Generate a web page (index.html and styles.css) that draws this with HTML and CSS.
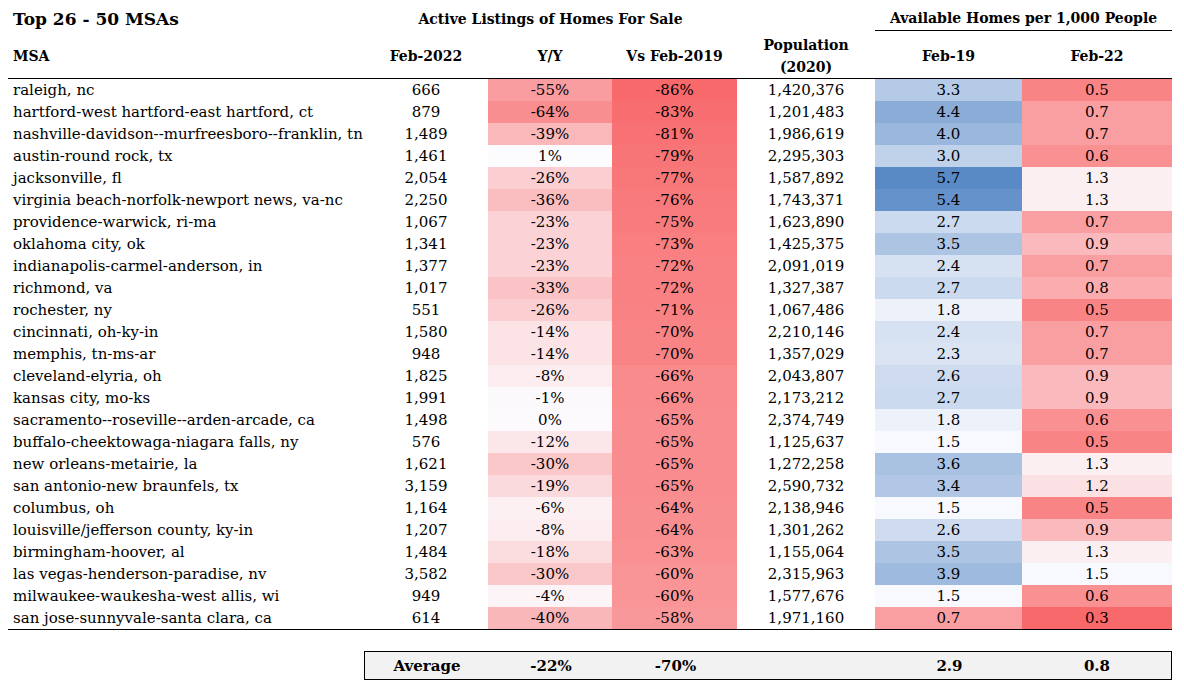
FILE: index.html
```html
<!DOCTYPE html>
<html lang="en">
<head>
<meta charset="utf-8">
<title>Top 26 - 50 MSAs</title>
<link rel="stylesheet" href="styles.css">
</head>
<body>
<table class="grid">
  <colgroup>
    <col class="c-msa"><col class="c-num"><col class="c-yy"><col class="c-vs"><col class="c-pop"><col class="c-f19"><col class="c-f22">
  </colgroup>
  <thead>
    <tr class="top">
      <th class="title">Top 26 - 50 MSAs</th>
      <th class="group" colspan="3">Active Listings of Homes For Sale</th>
      <th></th>
      <th class="group line" colspan="2">Available Homes per 1,000 People</th>
    </tr>
    <tr class="head">
      <th class="msa">MSA</th>
      <th>Feb-2022</th>
      <th>Y/Y</th>
      <th>Vs Feb-2019</th>
      <th class="pop">Population<br>(2020)</th>
      <th>Feb-19</th>
      <th>Feb-22</th>
    </tr>
  </thead>
  <tbody>
    <tr><td class="msa">raleigh, nc</td><td>666</td><td style="background:#F99DA0">-55%</td><td style="background:#F8696B">-86%</td><td>1,420,376</td><td style="background:#B4CAE6">3.3</td><td style="background:#F98486">0.5</td></tr>
    <tr><td class="msa">hartford-west hartford-east hartford, ct</td><td>879</td><td style="background:#F98E90">-64%</td><td style="background:#F86E70">-83%</td><td>1,201,483</td><td style="background:#8BACD7">4.4</td><td style="background:#F99EA1">0.7</td></tr>
    <tr><td class="msa">nashville-davidson--murfreesboro--franklin, tn</td><td>1,489</td><td style="background:#FAB8BB">-39%</td><td style="background:#F87174">-81%</td><td>1,986,619</td><td style="background:#9AB7DD">4.0</td><td style="background:#F99EA1">0.7</td></tr>
    <tr><td class="msa">austin-round rock, tx</td><td>1,461</td><td style="background:#FCFCFF">1%</td><td style="background:#F87577">-79%</td><td>2,295,303</td><td style="background:#C0D2EA">3.0</td><td style="background:#F99193">0.6</td></tr>
    <tr><td class="msa">jacksonville, fl</td><td>2,054</td><td style="background:#FBCED1">-26%</td><td style="background:#F8787A">-77%</td><td>1,587,892</td><td style="background:#5A8AC6">5.7</td><td style="background:#FCEFF1">1.3</td></tr>
    <tr><td class="msa">virginia beach-norfolk-newport news, va-nc</td><td>2,250</td><td style="background:#FABEC0">-36%</td><td style="background:#F87A7C">-76%</td><td>1,743,371</td><td style="background:#6592CA">5.4</td><td style="background:#FCEFF1">1.3</td></tr>
    <tr><td class="msa">providence-warwick, ri-ma</td><td>1,067</td><td style="background:#FBD3D6">-23%</td><td style="background:#F87C7E">-75%</td><td>1,623,890</td><td style="background:#CBDAEE">2.7</td><td style="background:#F99EA1">0.7</td></tr>
    <tr><td class="msa">oklahoma city, ok</td><td>1,341</td><td style="background:#FBD3D6">-23%</td><td style="background:#F97F81">-73%</td><td>1,425,375</td><td style="background:#ADC4E3">3.5</td><td style="background:#FAB9BC">0.9</td></tr>
    <tr><td class="msa">indianapolis-carmel-anderson, in</td><td>1,377</td><td style="background:#FBD3D6">-23%</td><td style="background:#F98183">-72%</td><td>2,091,019</td><td style="background:#D6E1F2">2.4</td><td style="background:#F99EA1">0.7</td></tr>
    <tr><td class="msa">richmond, va</td><td>1,017</td><td style="background:#FAC3C5">-33%</td><td style="background:#F98183">-72%</td><td>1,327,387</td><td style="background:#CBDAEE">2.7</td><td style="background:#FAACAE">0.8</td></tr>
    <tr><td class="msa">rochester, ny</td><td>551</td><td style="background:#FBCED1">-26%</td><td style="background:#F98284">-71%</td><td>1,067,486</td><td style="background:#EDF1FA">1.8</td><td style="background:#F98486">0.5</td></tr>
    <tr><td class="msa">cincinnati, oh-ky-in</td><td>1,580</td><td style="background:#FBE3E6">-14%</td><td style="background:#F98486">-70%</td><td>2,210,146</td><td style="background:#D6E1F2">2.4</td><td style="background:#F99EA1">0.7</td></tr>
    <tr><td class="msa">memphis, tn-ms-ar</td><td>948</td><td style="background:#FBE3E6">-14%</td><td style="background:#F98486">-70%</td><td>1,357,029</td><td style="background:#DAE4F3">2.3</td><td style="background:#F99EA1">0.7</td></tr>
    <tr><td class="msa">cleveland-elyria, oh</td><td>1,825</td><td style="background:#FCEDF0">-8%</td><td style="background:#F98B8D">-66%</td><td>2,043,807</td><td style="background:#CFDCEF">2.6</td><td style="background:#FAB9BC">0.9</td></tr>
    <tr><td class="msa">kansas city, mo-ks</td><td>1,991</td><td style="background:#FCF9FC">-1%</td><td style="background:#F98B8D">-66%</td><td>2,173,212</td><td style="background:#CBDAEE">2.7</td><td style="background:#FAB9BC">0.9</td></tr>
    <tr><td class="msa">sacramento--roseville--arden-arcade, ca</td><td>1,498</td><td style="background:#FCFAFD">0%</td><td style="background:#F98C8F">-65%</td><td>2,374,749</td><td style="background:#EDF1FA">1.8</td><td style="background:#F99193">0.6</td></tr>
    <tr><td class="msa">buffalo-cheektowaga-niagara falls, ny</td><td>576</td><td style="background:#FBE6E9">-12%</td><td style="background:#F98C8F">-65%</td><td>1,125,637</td><td style="background:#F8F9FE">1.5</td><td style="background:#F98486">0.5</td></tr>
    <tr><td class="msa">new orleans-metairie, la</td><td>1,621</td><td style="background:#FBC8CA">-30%</td><td style="background:#F98C8F">-65%</td><td>1,272,258</td><td style="background:#A9C2E2">3.6</td><td style="background:#FCEFF1">1.3</td></tr>
    <tr><td class="msa">san antonio-new braunfels, tx</td><td>3,159</td><td style="background:#FBDADD">-19%</td><td style="background:#F98C8F">-65%</td><td>2,590,732</td><td style="background:#B1C7E5">3.4</td><td style="background:#FBE1E4">1.2</td></tr>
    <tr><td class="msa">columbus, oh</td><td>1,164</td><td style="background:#FCF0F3">-6%</td><td style="background:#F98E90">-64%</td><td>2,138,946</td><td style="background:#F8F9FE">1.5</td><td style="background:#F98486">0.5</td></tr>
    <tr><td class="msa">louisville/jefferson county, ky-in</td><td>1,207</td><td style="background:#FCEDF0">-8%</td><td style="background:#F98E90">-64%</td><td>1,301,262</td><td style="background:#CFDCEF">2.6</td><td style="background:#FAB9BC">0.9</td></tr>
    <tr><td class="msa">birmingham-hoover, al</td><td>1,484</td><td style="background:#FBDCDF">-18%</td><td style="background:#F99092">-63%</td><td>1,155,064</td><td style="background:#ADC4E3">3.5</td><td style="background:#FCEFF1">1.3</td></tr>
    <tr><td class="msa">las vegas-henderson-paradise, nv</td><td>3,582</td><td style="background:#FBC8CA">-30%</td><td style="background:#F99597">-60%</td><td>2,315,963</td><td style="background:#9EBADE">3.9</td><td style="background:#F8F9FE">1.5</td></tr>
    <tr><td class="msa">milwaukee-waukesha-west allis, wi</td><td>949</td><td style="background:#FCF4F7">-4%</td><td style="background:#F99597">-60%</td><td>1,577,676</td><td style="background:#F8F9FE">1.5</td><td style="background:#F99193">0.6</td></tr>
    <tr class="last"><td class="msa">san jose-sunnyvale-santa clara, ca</td><td>614</td><td style="background:#FAB7B9">-40%</td><td style="background:#F9989B">-58%</td><td>1,971,160</td><td style="background:#F99EA1">0.7</td><td style="background:#F8696B">0.3</td></tr>
  </tbody>
</table>

<div class="avg">
  <span class="avg-cell c1">Average</span>
  <span class="avg-cell c2">-22%</span>
  <span class="avg-cell c3">-70%</span>
  <span class="avg-cell c4"></span>
  <span class="avg-cell c5">2.9</span>
  <span class="avg-cell c6">0.8</span>
</div>
</body>
</html>
```

FILE: styles.css
```css
html, body {
  margin: 0;
  padding: 0;
  background: #ffffff;
}

body {
  font-family: "DejaVu Serif", "Liberation Serif", serif;
  color: #000000;
  font-size: 15px;
}

.grid {
  margin-left: 8px;
  border-collapse: collapse;
  table-layout: fixed;
  width: 1164px;
}

.c-msa { width: 356px; }
.c-num { width: 124px; }
.c-yy  { width: 124px; }
.c-vs  { width: 125px; }
.c-pop { width: 138px; }
.c-f19 { width: 147px; }
.c-f22 { width: 150px; }

.grid th,
.grid td {
  padding: 0;
  text-align: center;
  white-space: nowrap;
}

.top th {
  height: 27px;
  vertical-align: bottom;
  padding-bottom: 3px;
  line-height: 18px;
  font-weight: bold;
  font-size: 14px;
}

.top .title {
  text-align: left;
  padding-left: 5px;
  font-size: 17px;
}

.top .line {
  border-bottom: 1px solid #000;
}

.head th {
  height: 44px;
  font-size: 14px;
  font-weight: bold;
  line-height: 22px;
  vertical-align: middle;
  border-bottom: 1px solid #000;
  padding-top: 3px;
}

.head .msa {
  text-align: left;
  padding-left: 5px;
}

.grid tbody tr {
  height: 22px;
}

.grid tbody td {
  line-height: 21px;
  height: 21px;
  padding-top: 1px;
}

.grid tbody td.msa {
  text-align: left;
  padding-left: 5px;
}

.grid tbody tr.last td {
  border-bottom: 1px solid #000;
}

.avg {
  margin: 21px 0 0 364px;
  width: 806px;
  height: 27px;
  border: 1px solid #000;
  background: #f2f2f2;
  display: flex;
  font-weight: bold;
  font-size: 15px;
}

.avg-cell {
  display: flex;
  align-items: center;
  justify-content: center;
}

.avg .c1 { width: 124px; }
.avg .c2 { width: 124px; }
.avg .c3 { width: 125px; }
.avg .c4 { width: 138px; }
.avg .c5 { width: 147px; }
.avg .c6 { width: 148px; }
```
